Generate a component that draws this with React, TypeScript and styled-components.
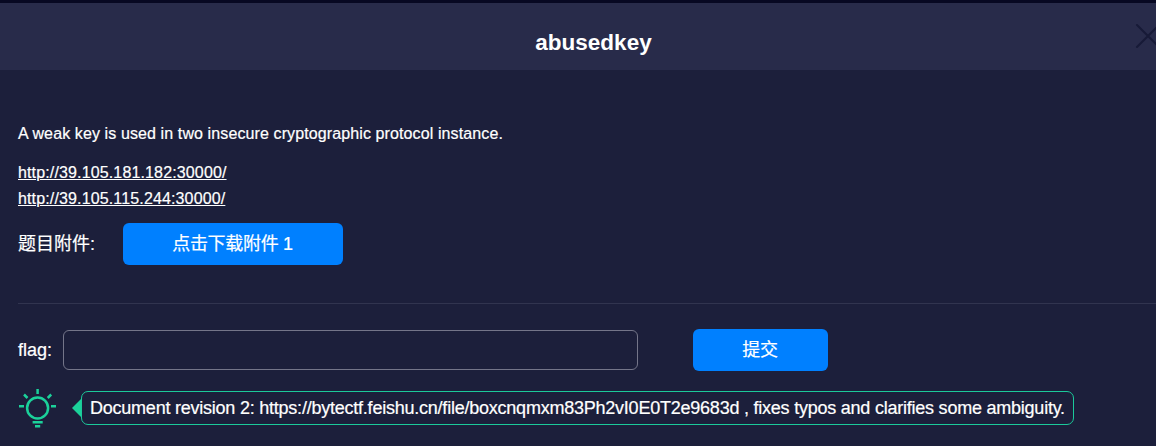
import React from "react";
import styled, { createGlobalStyle } from "styled-components";

const GlobalStyle = createGlobalStyle`
  * { box-sizing: border-box; }
  body {
    margin: 0;
    background: #1c1f3b;
    color: #fff;
    font-family: "Liberation Sans", Arial, "Noto Sans CJK SC", sans-serif;
    overflow: hidden;
  }
`;

const Dialog = styled.main`
  width: 1156px;
  height: 446px;
  overflow: hidden;
  border-top: 3px solid #070822;
  background: #1c1f3b;
`;

const Header = styled.header`
  display: grid;
  grid-template-columns: 30px 1fr 30px;
  align-items: center;
  height: 67px;
  background: #282b4a;
`;

const Title = styled.h1`
  grid-column: 2;
  margin: 0;
  padding: 13px 0 0 31px;
  font-size: 22.5px;
  line-height: 26px;
  text-align: center;
`;

const CloseButton = styled.button`
  width: 26px;
  height: 26px;
  margin: -2px 0 0 9px;
  padding: 0;
  border: 0;
  background: none;
  svg { display: block; }
`;

const Content = styled.section`
  padding: 51px 0 0 18px;
  -webkit-text-stroke: 0.2px currentColor;
`;

const Description = styled.p`
  margin: 0 0 13px;
  font-size: 16px;
  line-height: 26px;
  letter-spacing: 0.11px;
`;

const Links = styled.div`
  display: flex;
  flex-direction: column;
  align-items: flex-start;
`;

const TaskLink = styled.a`
  color: #fff;
  font-size: 16px;
  line-height: 26px;
  letter-spacing: 0.14px;
  text-decoration: underline;
`;

const Row = styled.div<{ $top: number }>`
  display: flex;
  align-items: center;
  height: 42px;
  margin-top: ${(p) => p.$top}px;
`;

const Label = styled.label<{ $width: number }>`
  flex: 0 0 ${(p) => p.$width}px;
  font-size: 18px;
  line-height: 26px;
  white-space: nowrap;
`;

const Button = styled.button<{ $width: number }>`
  width: ${(p) => p.$width}px;
  height: 42px;
  padding: 0 1px 4px 0;
  border: 0;
  border-radius: 6px;
  background: #0080ff;
  color: #fff;
  font: inherit;
  font-size: 18px;
  letter-spacing: -0.3px;
`;

const Divider = styled.hr`
  height: 1px;
  margin: 38px 0 0;
  border: 0;
  background: #31344f;
`;

const FlagInput = styled.input`
  width: 575px;
  height: 40px;
  margin-right: 55px;
  border: 1px solid #747589;
  border-radius: 6px;
  background: transparent;
  color: #fff;
  font: inherit;
`;

const HintRow = styled.div`
  display: flex;
  align-items: center;
  height: 42px;
  margin-top: 16px;
  svg { flex: none; display: block; }
`;

const Pointer = styled.i`
  width: 0;
  height: 0;
  margin-left: 15px;
  border: solid transparent;
  border-width: 9px 9px 9px 0;
  border-right-color: #1bd19a;
`;

const Hint = styled.div`
  width: 993px;
  height: 34px;
  padding-left: 8px;
  border: 1px solid #1bc99a;
  border-radius: 7px;
  font-size: 18px;
  letter-spacing: -0.23px;
  line-height: 32px;
  white-space: nowrap;
`;

const CloseIcon = () => (
  <svg width="26" height="26" viewBox="0 0 26 26" stroke="#171a37" strokeWidth="2" strokeLinecap="round">
    <path d="M2 2 24 24M24 2 2 24" />
  </svg>
);

const BulbIcon = () => (
  <svg width="39" height="40" viewBox="0 0 39 40" fill="none" stroke="#1bd19a" strokeWidth="2.5">
    <circle cx="19.6" cy="20" r="10.5" />
    <path d="M19.6 1V6M6 6.5 9.5 10M33.2 6.5 29.7 10M1 18.3H6M33 18.3H38M14.6 34.2H24.7M17 38.3H22.2" />
  </svg>
);

export default function App() {
  return (
    <>
      <GlobalStyle />
      <Dialog>
        <Header>
          <Title>abusedkey</Title>
          <CloseButton aria-label="Close"><CloseIcon /></CloseButton>
        </Header>
        <Content>
          <Description>A weak key is used in two insecure cryptographic protocol instance.</Description>
          <Links>
            <TaskLink href="http://39.105.181.182:30000/">http://39.105.181.182:30000/</TaskLink>
            <TaskLink href="http://39.105.115.244:30000/">http://39.105.115.244:30000/</TaskLink>
          </Links>
          <Row $top={11}>
            <Label as="span" $width={105}>题目附件:</Label>
            <Button $width={220}>点击下载附件 1</Button>
          </Row>
          <Divider />
          <Row $top={25}>
            <Label htmlFor="flag" $width={45}>flag:</Label>
            <FlagInput id="flag" />
            <Button $width={135}>提交</Button>
          </Row>
          <HintRow>
            <BulbIcon />
            <Pointer />
            <Hint>Document revision 2: https://bytectf.feishu.cn/file/boxcnqmxm83Ph2vI0E0T2e9683d , fixes typos and clarifies some ambiguity.</Hint>
          </HintRow>
        </Content>
      </Dialog>
    </>
  );
}
